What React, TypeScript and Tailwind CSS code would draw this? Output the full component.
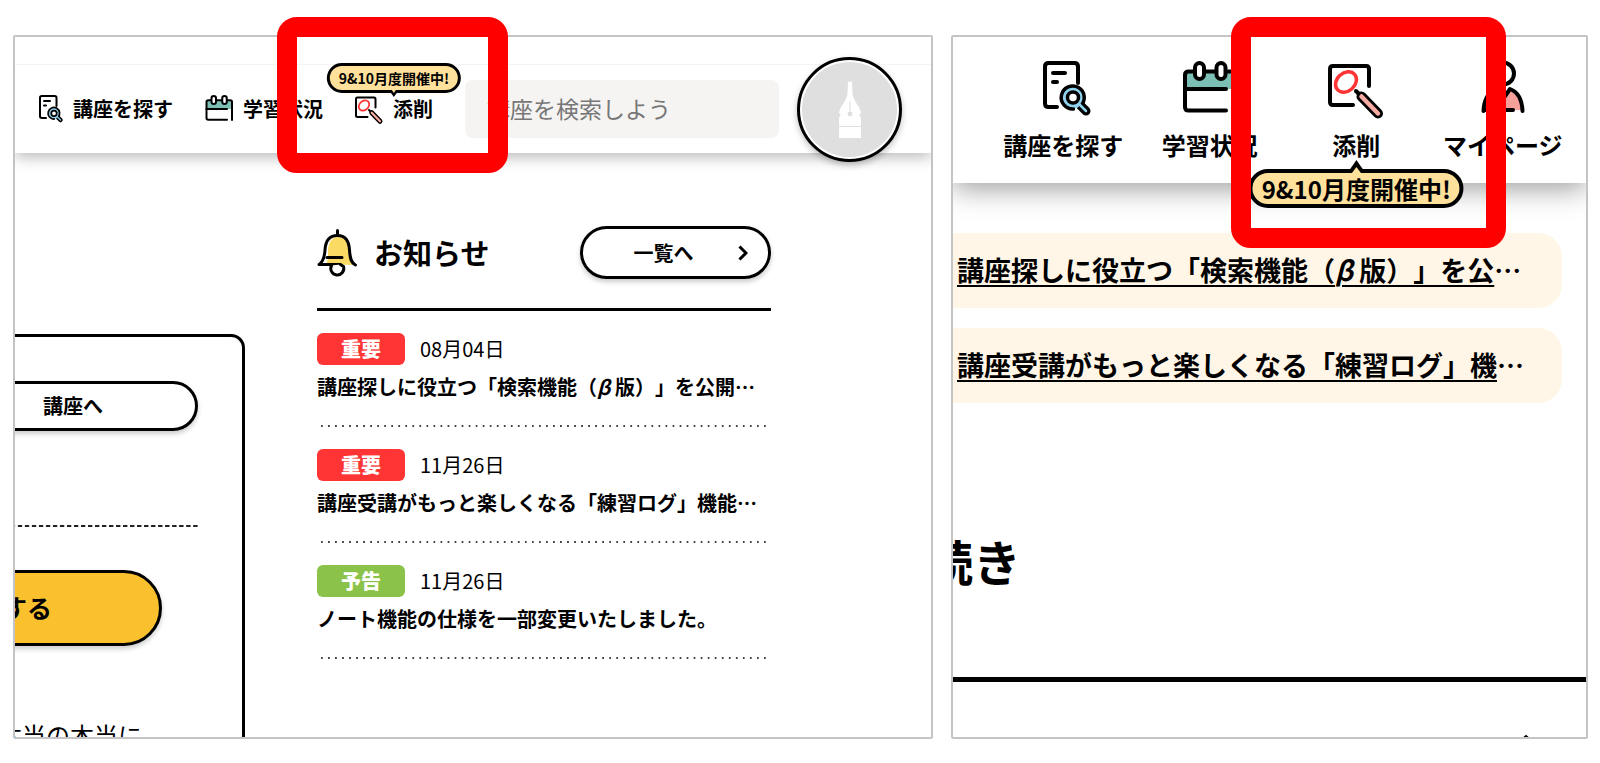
import React from 'react';

type IconProps = { className?: string };

const SearchCourseIcon: React.FC<IconProps> = ({ className }) => (
  <svg viewBox="0 0 56 56" className={className} fill="none" stroke="#000" strokeWidth="4" strokeLinecap="round" overflow="visible" aria-hidden="true">
    <path d="M22 46H13.500q-3.500 0-3.500-3.500V5.500q0-3.500 3.500-3.500H39.500q3.500 0 3.500 3.500V22" />
    <path d="M18 12H30M18 21H22" />
    <path d="M45.500 44.500L51 50" strokeWidth="9" />
    <circle cx="38" cy="36.500" r="8.500" fill="#fff" stroke="#8fd3ee" strokeWidth="5" />
    <path d="M38.500 48A11.500 11.500 0 1 1 45.500 45" strokeWidth="3.500" />
    <circle cx="38" cy="36.500" r="5.500" strokeWidth="3.500" />
    <path d="M44.500 43.500L51 50" stroke="#8fd3ee" strokeWidth="2.500" />
  </svg>
);

const CalendarIcon: React.FC<IconProps> = ({ className }) => (
  <svg viewBox="0 0 56 56" className={className} fill="none" stroke="#000" strokeWidth="4" strokeLinecap="round" overflow="visible" aria-hidden="true">
    <path d="M3 11H54V28H3z" fill="#7bbfb5" stroke="none" />
    <path d="M44 49.500H6.500q-3.500 0-3.500-3.500V14q0-3.500 3.500-3.500H50.500q3.500 0 3.500 3.500V50" />
    <path d="M3 28H44" />
    <rect x="13" y="2" width="9" height="16" rx="4.500" fill="#fff" />
    <rect x="34.500" y="2" width="9" height="16" rx="4.500" fill="#fff" />
  </svg>
);

const CorrectionIcon: React.FC<IconProps> = ({ className }) => (
  <svg viewBox="0 0 56 56" className={className} fill="none" stroke="#000" strokeWidth="4" strokeLinecap="round" overflow="visible" aria-hidden="true">
    <path d="M25 44H5q-3 0-3-3V8q0-3 3-3H38q3 0 3 3V25" />
    <ellipse cx="18" cy="21" rx="11.500" ry="9" transform="rotate(-42 18 21)" stroke="#ff3434" strokeWidth="3.500" />
    <path d="M28 30L31 33" strokeWidth="4" />
    <path d="M33.500 35.500L50 52.500" strokeWidth="10" />
    <path d="M33.500 35.500L50 52.500" stroke="#f6aaa2" strokeWidth="4.500" />
  </svg>
);

const PersonIcon: React.FC<IconProps> = ({ className }) => (
  <svg viewBox="0 0 56 56" className={className} fill="none" stroke="#000" strokeWidth="4" strokeLinecap="round" strokeLinejoin="round" overflow="visible" aria-hidden="true">
    <path d="M8.500 49C9 38 14 31 21 28L28 38L35 28C43 31 47 38 47.500 49z" fill="#f6a09c" stroke="none" />
    <circle cx="28" cy="12.500" r="11" />
    <path d="M8.500 50C9 38 14 31 21 28L28 38L35 28C43 31 47 38 47.500 50" />
    <path d="M9 49H38" />
  </svg>
);

const BellIcon: React.FC<IconProps> = ({ className }) => (
  <svg viewBox="0 0 40 48" className={className} fill="none" stroke="#000" strokeWidth="3" strokeLinecap="round" strokeLinejoin="round" overflow="visible" aria-hidden="true">
    <path d="M9 35C11 32 11 28 11 22C11.500 13 15 8 21 8C28 8 31 12 31.500 22C32 29 33 33 36 36z" fill="#fada62" stroke="none" />
    <path d="M20.500 1.500V6" />
    <path d="M23 35.500H2C6 33 7.500 29 8 21C8.500 12 12 6.500 20.500 6.500C29 6.500 32 12 32.500 21C33 29 34 34 38.500 36" />
    <path d="M10 28.500H25" />
    <path d="M14.500 36.500A6.500 6.500 0 1 0 26.500 37.500L23.500 35.500" fill="#fff" />
  </svg>
);

const NibIcon: React.FC<IconProps> = ({ className }) => (
  <svg viewBox="0 0 22 57" className={className} fill="#fff" aria-hidden="true">
    <path d="M9 1Q11 0 13 1L13.500 13C15 21 21 25 22 32Q19 34 22 36.500V45H0V36.500Q3 34 0 32C1 25 7 21 8.500 13z" />
    <path d="M0 46H22V57H0z" />
    <path d="M11 20V31" stroke="#dfdfdf" strokeWidth="1" />
    <circle cx="11" cy="33" r="2.400" fill="#dfdfdf" />
  </svg>
);

const ChevronIcon: React.FC<IconProps> = ({ className }) => (
  <svg viewBox="0 0 10 16" className={className} fill="none" stroke="#000" strokeWidth="3" aria-hidden="true">
    <path d="M1.500 1.500L8 8L1.500 14.500" />
  </svg>
);

const navLinks = [
  { href: '#search', label: '講座を探す', Icon: SearchCourseIcon },
  { href: '#status', label: '学習状況', Icon: CalendarIcon },
  { href: '#correction', label: '添削', Icon: CorrectionIcon, notice: '9&10月度開催中!' },
  { href: '#mypage', label: 'マイページ', Icon: PersonIcon },
];

const news = [
  {
    tag: '重要',
    tagColor: 'bg-[#ff3434]',
    date: '08月04日',
    title: <>講座探しに役立つ「検索機能（<i>β</i> 版）」を公開…</>,
  },
  {
    tag: '重要',
    tagColor: 'bg-[#ff3434]',
    date: '11月26日',
    title: <>講座受講がもっと楽しくなる「練習ログ」機能…</>,
  },
  {
    tag: '予告',
    tagColor: 'bg-[#8bc34a]',
    date: '11月26日',
    title: <>ノート機能の仕様を一部変更いたしました。</>,
  },
];

const topics = [
  <>講座探しに役立つ「検索機能（<i>β</i> 版）」を公</>,
  <>講座受講がもっと楽しくなる「練習ログ」機</>,
];

const DesktopHeader: React.FC = () => (
  <header className="relative shrink-0 pt-[27px] bg-white shadow-[0_4px_14px_rgba(0,0,0,0.28)]">
    <div className="flex h-[89px] items-center border-t border-[#f4f4f4] pl-5 pr-[29px]">
      <nav className="flex shrink-0 items-center gap-8">
        {navLinks.slice(0, 3).map(({ href, label, Icon, notice }) => (
          <a key={href} href={href} className="relative flex items-center gap-[10px] text-xl font-bold whitespace-nowrap">
            <Icon className="size-7" />
            <span>{label}</span>
            {notice && (
              <span className="absolute bottom-full left-1/2 mb-0.5 -translate-x-1/2 rounded-full border-[3px] border-black bg-[#ffe19b] px-[9px] text-sm leading-6">
                {notice}
                <svg viewBox="0 0 12 8" className="absolute -bottom-2 left-1/2 h-2 w-3 -translate-x-1/2" aria-hidden="true">
                  <path d="M1 0H11L6 7z" />
                  <path d="M4 0H8L6 3z" fill="#ffe19b" />
                </svg>
              </span>
            )}
          </a>
        ))}
      </nav>
      <input
        type="search"
        aria-label="講座を検索"
        placeholder="講座を検索しよう"
        className="ml-8 h-[58px] min-w-0 flex-1 rounded-lg bg-[#f5f4f3] px-[22px] pb-[3px] text-[23px] placeholder:text-[#777]"
      />
      <button aria-label="アカウント" className="ml-[18px] -my-4 flex size-[105px] shrink-0 items-center justify-center rounded-full border-[3px] border-black bg-[#dfdfdf] shadow-[inset_0_0_0_2px_#fff,0_3px_6px_rgba(0,0,0,0.25)]">
        <NibIcon className="h-[57px] w-[22px]" />
      </button>
    </div>
  </header>
);

const CourseCard: React.FC = () => (
  <section className="mt-[181px] -ml-20 flex w-[310px] shrink-0 flex-col items-end rounded-tr-[14px] border-[3px] border-black pt-11 pr-11">
    <button className="h-[50px] w-[250px] shrink-0 rounded-full border-[3px] border-black bg-white text-xl font-bold shadow-[0_3px_5px_rgba(0,0,0,0.2)]">
      講座へ
    </button>
    <div className="mt-[94px] h-[2px] w-full shrink-0 bg-[linear-gradient(90deg,transparent_35%,#222_35%)] bg-[length:7px_2px] bg-repeat-round" />
    <button className="mt-[43px] mr-9 h-[76px] w-80 shrink-0 rounded-full border-[3px] border-black bg-[#fac02d] text-[25px] font-bold shadow-[0_3px_5px_rgba(0,0,0,0.2)]">
      受講する
    </button>
    <p className="mt-[73px] mr-14 text-2xl leading-8 whitespace-nowrap">本当の本当に</p>
  </section>
);

const NewsList: React.FC = () => (
  <section className="mr-40 ml-[72px] min-w-0 flex-1 pt-[73px]">
    <div className="flex items-center justify-between border-b-[3px] border-black pb-[29px]">
      <h2 className="flex items-center gap-[17px] text-[29px] font-bold">
        <BellIcon className="h-12 w-10" />
        お知らせ
      </h2>
      <a href="#news" className="relative flex h-[53px] w-[191px] items-center justify-center rounded-full border-[3px] border-black bg-white pr-6 text-xl font-bold shadow-[0_3px_5px_rgba(0,0,0,0.2)]">
        一覧へ
        <ChevronIcon className="absolute right-5 h-4 w-[10px]" />
      </a>
    </div>
    <ul>
      {news.map(({ tag, tagColor, date, title }, index) => (
        <li key={index} className="pt-[22px]">
          <div className="flex h-8 items-center gap-[15px] text-xl">
            <span className={`flex h-8 w-[88px] items-center justify-center rounded-md font-black text-white ${tagColor}`}>{tag}</span>
            <time>{date}</time>
          </div>
          <a href="#news" className="mt-2 block text-xl leading-7 font-bold whitespace-nowrap">{title}</a>
          <div className="mt-6 ml-1 h-[2px] bg-[linear-gradient(90deg,#444_29%,transparent_29%)] bg-[length:7px_2px] bg-repeat-round" />
        </li>
      ))}
    </ul>
  </section>
);

const MobileHeader: React.FC = () => (
  <header className="relative h-[146px] shrink-0 bg-white pt-6 pr-[10px] pl-[37px] shadow-[0_6px_26px_rgba(0,0,0,0.38)]">
    <nav className="grid grid-cols-4">
      {navLinks.map(({ href, label, Icon, notice }) => (
        <a key={href} href={href} className="relative flex flex-col items-center gap-4 text-2xl leading-6 font-bold whitespace-nowrap">
          <Icon className="size-14" />
          <span>{label}</span>
          {notice && (
            <span className="absolute top-full left-1/2 mt-3 -translate-x-1/2 rounded-full border-4 border-black bg-[#ffe19b] px-[9px] leading-[31px]">
              {notice}
              <svg viewBox="0 0 20 16" className="absolute -top-[13px] left-1/2 h-4 w-5 -translate-x-1/2" aria-hidden="true">
                <path d="M1 13L10 0L19 13z" />
                <path d="M4 15L10 7L16 15z" fill="#ffe19b" />
              </svg>
            </span>
          )}
        </a>
      ))}
    </nav>
  </header>
);

const App: React.FC = () => {
  return (
    <main
      lang="ja"
      className="grid h-screen grid-cols-[920fr_637fr] gap-[18px] overflow-hidden bg-white pt-[35px] pr-3 pb-6 pl-[13px] font-['Noto_Sans_CJK_JP',sans-serif] text-black [text-spacing-trim:space-all]"
    >
      {/* Desktop */}
      <div className="relative min-h-0 min-w-0">
        <div className="flex h-full flex-col overflow-hidden rounded-xs border-2 border-[#c4c4c4]">
          <DesktopHeader />
          <div className="flex flex-1">
            <CourseCard />
            <NewsList />
          </div>
        </div>
        <div className="pointer-events-none absolute -top-[18px] left-[264px] z-10 h-[156px] w-[231px] rounded-[20px] border-[20px] border-[#ff0000]" />
      </div>

      {/* Mobile */}
      <div className="relative min-h-0 min-w-0">
        <div className="flex h-full flex-col overflow-hidden rounded-xs border-2 border-[#c4c4c4]">
          <MobileHeader />
          <ul className="mt-[50px] mr-6 flex flex-col gap-5">
            {topics.map((topic, index) => (
              <li key={index} className="flex h-[75px] items-center rounded-r-3xl bg-[#fff6e8] pl-1 text-[27px] font-bold whitespace-nowrap">
                <a href="#news" className="underline decoration-2 underline-offset-4">{topic}</a>…
              </li>
            ))}
          </ul>
          <h2 className="mt-[127px] -ml-7 text-5xl leading-[60px] font-bold">続き</h2>
          <hr className="mt-[87px] shrink-0 border-t-[5px] border-black" />
          <svg viewBox="0 0 24 12" className="mt-[52px] mr-12 h-3 w-6 shrink-0 self-end" fill="none" stroke="#000" strokeWidth="2" aria-hidden="true">
            <path d="M2 11L12 2L22 11" />
          </svg>
        </div>
        <div className="pointer-events-none absolute -top-[18px] left-[280px] z-10 h-[231px] w-[275px] rounded-[20px] border-[20px] border-[#ff0000]" />
      </div>
    </main>
  );
};

export default App;
